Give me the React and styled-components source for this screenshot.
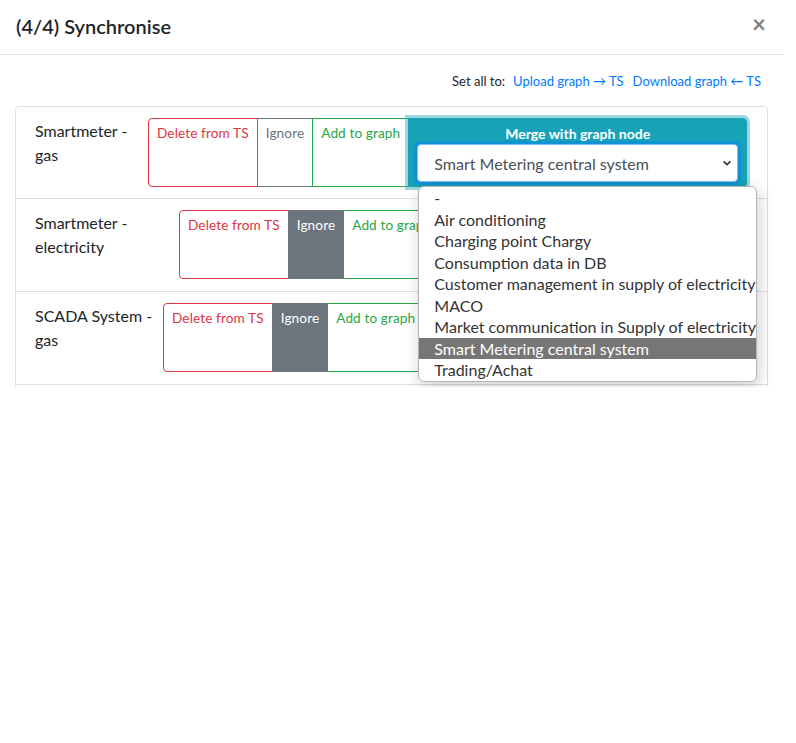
import React from "react";
import styled, { createGlobalStyle } from "styled-components";

const GlobalStyle = createGlobalStyle`
  body {
    margin: 0;
    background: #fff;
    font-family: Lato, "Liberation Sans", sans-serif;
    color: #212529;
  }
`;

const rows = [
  { name: "Smartmeter - gas", labelWidth: 113, choice: "merge" },
  { name: "Smartmeter - electricity", labelWidth: 144, choice: "ignore" },
  { name: "SCADA System - gas", labelWidth: 128, choice: "ignore" },
  { name: "SCADA System - electricity", labelWidth: 128, choice: "ignore" },
];

const nodes = [
  "-",
  "Air conditioning",
  "Charging point Chargy",
  "Consumption data in DB",
  "Customer management in supply of electricity",
  "MACO",
  "Market communication in Supply of electricity",
  "Smart Metering central system",
  "Trading/Achat",
];

const tones = {
  danger: "#dc3545",
  secondary: "#6c757d",
  success: "#28a745",
  info: "#17a2b8",
};

export default function App() {
  return (
    <>
      <GlobalStyle />
      <Viewport>
        <Modal>
          <Header>
            <Title>(4/4) Synchronise</Title>
            <Close>×</Close>
          </Header>
          <Body>
            <SetAll>
              <span>Set all to:</span>
              <LinkButton>Upload graph → TS</LinkButton>
              <LinkButton>Download graph ← TS</LinkButton>
            </SetAll>
            <Card>
              {rows.map((row, i) => (
                <Row key={i}>
                  <Label $width={row.labelWidth}>{row.name}</Label>
                  <Group>
                    <Choice $tone="danger" $first>Delete from TS</Choice>
                    <Choice $tone="secondary" $active={row.choice === "ignore"}>
                      Ignore
                    </Choice>
                    <Choice $tone="success">Add to graph</Choice>
                    <Merge $active={row.choice === "merge"}>
                      <MergeTitle>Merge with graph node</MergeTitle>
                      <SelectBox $focused={row.choice === "merge"}>
                        <span>Smart Metering central system</span>
                        <svg width="12" height="12" viewBox="0 0 12 12">
                          <path d="M2.6 4.3 6 7.5l3.4-3.2" fill="none" stroke="#333" strokeWidth="1.7" />
                        </svg>
                        {i === 0 && (
                          <Dropdown>
                            {nodes.map((n) => (
                              <Option key={n} $selected={n === "Smart Metering central system"}>
                                {n}
                              </Option>
                            ))}
                          </Dropdown>
                        )}
                      </SelectBox>
                    </Merge>
                  </Group>
                </Row>
              ))}
            </Card>
          </Body>
        </Modal>
      </Viewport>
    </>
  );
}

const Viewport = styled.div`
  height: 387px;
  overflow: hidden;
`;

const Modal = styled.div`
  width: 784px;
  background: #fff;
`;

const Header = styled.div`
  display: flex;
  align-items: center;
  justify-content: space-between;
  padding: 13px 16px 15px 16px;
  border-bottom: 1px solid #e5e5e5;
`;

const Title = styled.h5`
  margin: 0;
  font-size: 20px;
  font-weight: 600;
  line-height: 26px;
  color: #212529;
`;

const Close = styled.span`
  font-size: 24px;
  font-weight: 700;
  line-height: 1;
  color: #000;
  opacity: 0.5;
  margin: -4px 2px 0 0;
`;

const Body = styled.div`
  padding: 16px 16px 16px 15px;
`;

const SetAll = styled.div`
  display: flex;
  justify-content: flex-end;
  align-items: center;
  gap: 7px;
  font-size: 13px;
  line-height: 20px;
  color: #212529;
  margin-bottom: 15px;
  padding-right: 6px;
`;

const LinkButton = styled.a`
  color: #007bff;
  padding: 0 1px;
  cursor: pointer;
`;

const Card = styled.div`
  border: 1px solid rgba(0, 0, 0, 0.125);
  border-radius: 4px;
`;

const Row = styled.div`
  display: flex;
  align-items: flex-start;
  padding: 11px 20px 11px 19px;
  border-bottom: 1px solid rgba(0, 0, 0, 0.125);

  & + & {
    padding-bottom: 12px;
  }
`;

const Label = styled.div`
  flex: 0 0 ${(p) => p.$width}px;
  padding-top: 1px;
  font-size: 16px;
  line-height: 24px;
  color: #212529;
`;

const Group = styled.div`
  flex: 1;
  display: flex;
  align-items: stretch;
`;

const Choice = styled.label`
  display: block;
  padding: 4px 8px;
  font-size: 13.6px;
  letter-spacing: 0.12px;
  line-height: 21px;
  text-align: center;
  white-space: nowrap;
  border: 1px solid ${(p) => tones[p.$tone]};
  margin-left: ${(p) => (p.$first ? "0" : "-1px")};
  border-radius: ${(p) => (p.$first ? "4px 0 0 4px" : "0")};
  color: ${(p) => (p.$active ? "#fff" : tones[p.$tone])};
  background: ${(p) => (p.$active ? tones[p.$tone] : "#fff")};
`;

const Merge = styled.div`
  position: relative;
  flex: 1;
  margin-left: -1px;
  padding: 4px 8px 4px 8px;
  border: 1px solid ${tones.info};
  border-radius: 0 4px 4px 0;
  background: ${(p) => (p.$active ? tones.info : "#fff")};
  color: ${(p) => (p.$active ? "#fff" : tones.info)};
  box-shadow: ${(p) => (p.$active ? "0 0 0 3px rgba(58, 176, 195, 0.5)" : "none")};
  z-index: ${(p) => (p.$active ? 2 : 0)};
`;

const MergeTitle = styled.div`
  font-size: 14px;
  font-weight: 700;
  line-height: 21px;
  text-align: center;
`;

const SelectBox = styled.div`
  position: relative;
  display: flex;
  align-items: center;
  justify-content: space-between;
  height: 38px;
  box-sizing: border-box;
  padding: 0 4px 0 16px;
  background: #fff;
  border: 1px solid ${(p) => (p.$focused ? "#80bdff" : "#ced4da")};
  border-radius: 4px;
  box-shadow: ${(p) => (p.$focused ? "0 0 0 3px rgba(0, 123, 255, 0.35)" : "none")};
  font-size: 16px;
  color: #495057;
`;

const Dropdown = styled.div`
  position: absolute;
  top: 41px;
  left: 0;
  width: 337px;
  z-index: 10;
  background: #fff;
  border: 1px solid #b5b5b5;
  border-radius: 6px;
  box-shadow: 2px 4px 16px rgba(0, 0, 0, 0.2);
  overflow: hidden;
`;

const Option = styled.div`
  padding: 0 0 0 15px;
  font-size: 16px;
  line-height: 21.5px;
  white-space: nowrap;
  color: ${(p) => (p.$selected ? "#fff" : "#333")};
  background: ${(p) => (p.$selected ? "#767676" : "transparent")};
`;
